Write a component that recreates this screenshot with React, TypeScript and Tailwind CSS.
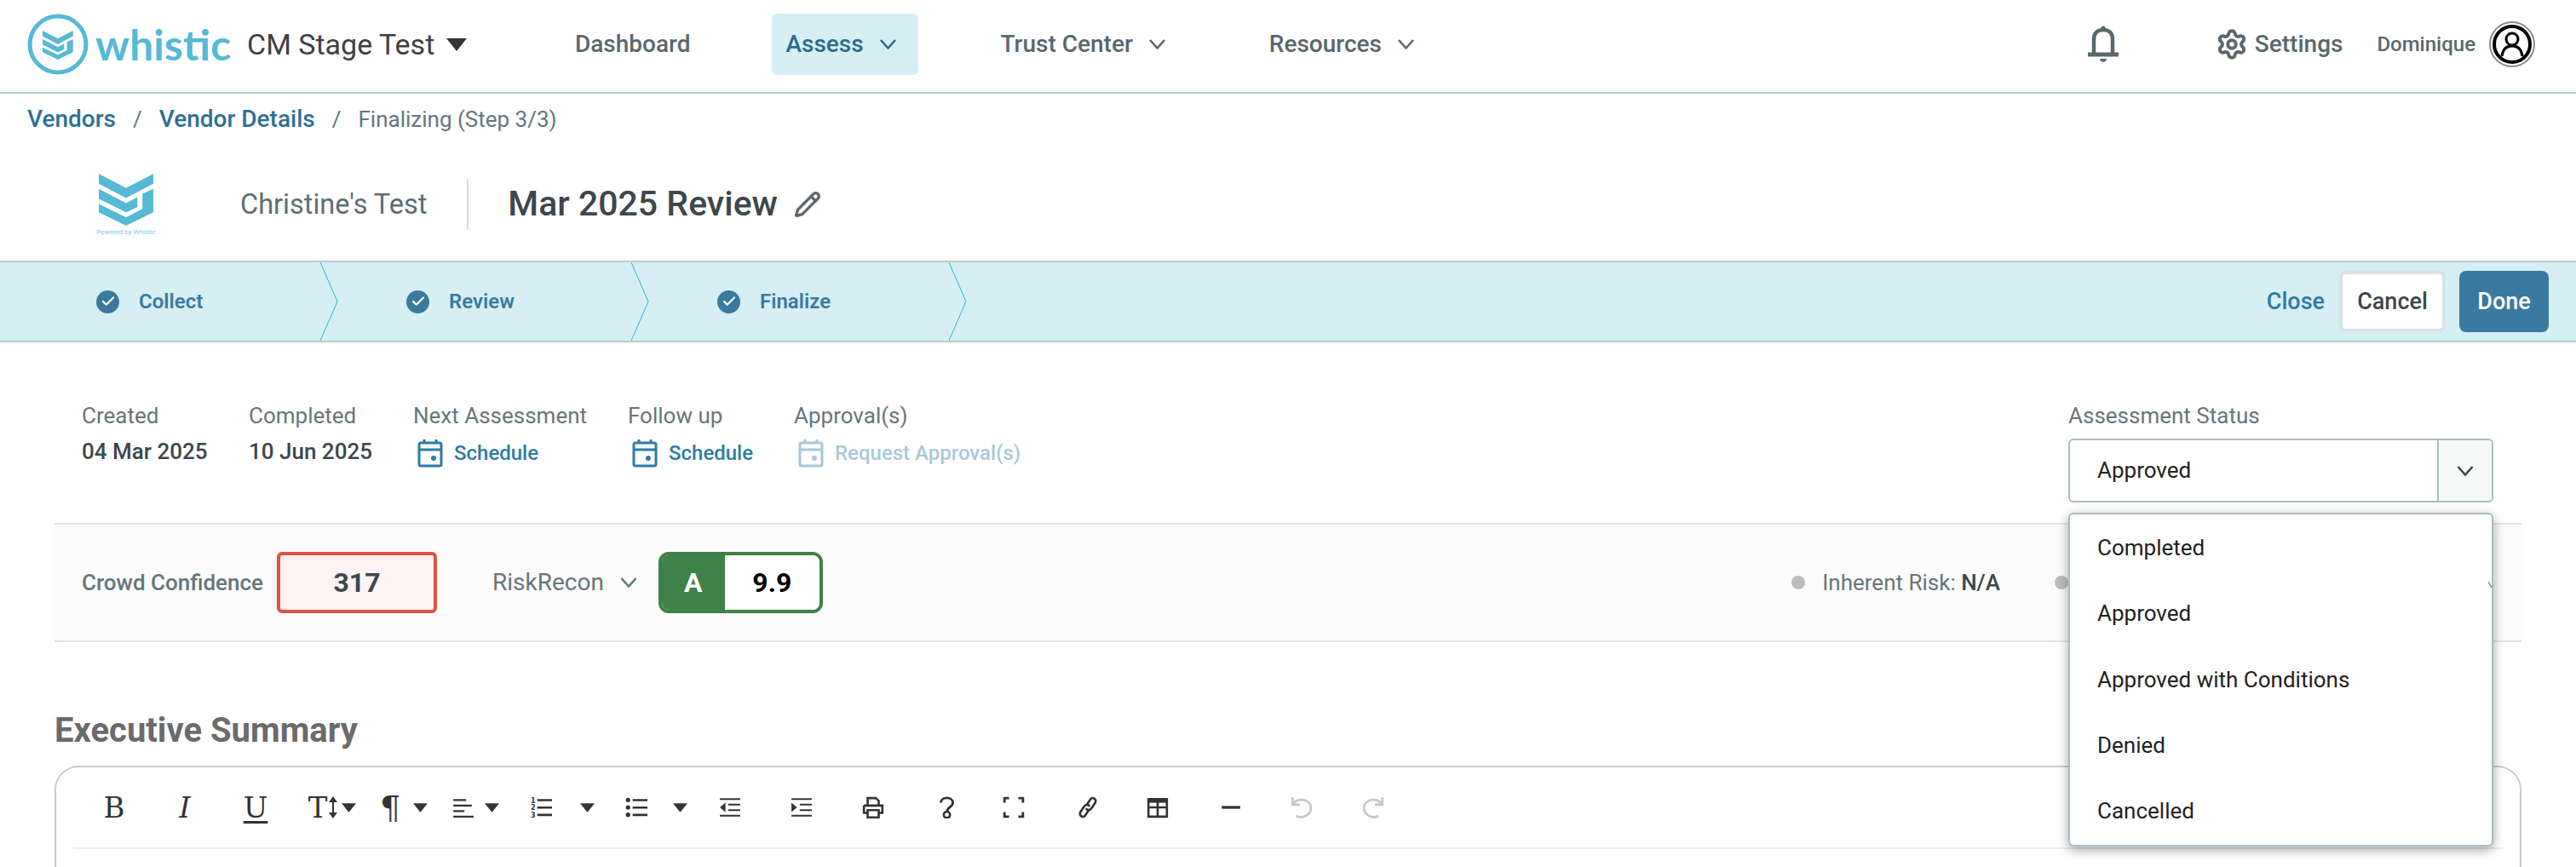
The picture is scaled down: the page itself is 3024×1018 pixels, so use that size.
import { Check, Pencil, Settings } from "lucide-react";

const font = { fontFamily: "Roboto, 'Liberation Sans', sans-serif" };

const WhisticMark = ({ className }: { className?: string }) => (
  <svg viewBox="0 0 65 62" className={className} fill="#56b9d6">
    <path d="M0 0 L32.5 17 L65 0 V12 L32.5 29 L0 12 Z" />
    <path d="M0 18 L32.5 35 L46 28 V40 L32.5 46 L0 30 Z" />
    <path d="M52 24 L65 18 V46 L32.5 62 L0 46 V36 L32.5 52 L52 42 Z" />
  </svg>
);

const Caret = ({ className }: { className?: string }) => (
  <svg viewBox="0 0 16 10" className={className} fill="#333">
    <path d="M0 0 H16 L8 10 Z" />
  </svg>
);

const Chev = ({ className }: { className?: string }) => (
  <svg viewBox="0 0 19 12" className={className} fill="none" stroke="currentColor" strokeWidth="2.6">
    <path d="M1 1 L9.5 10.5 L18 1" />
  </svg>
);

const CalendarIcon = ({ color }: { color: string }) => (
  <svg width="30" height="34" viewBox="0 0 30 34" fill="none" stroke={color} strokeWidth="3">
    <rect x="2" y="5" width="26" height="27" rx="2" />
    <path d="M2 13 H28" strokeWidth="3" />
    <path d="M8 1 V6 M22 1 V6" />
    <circle cx="19" cy="23" r="3" fill={color} stroke="none" />
  </svg>
);

const StepCheck = () => (
  <span className="w-[27px] h-[27px] rounded-full bg-[#3a7a9f] flex items-center justify-center">
    <Check className="w-[18px] h-[18px] text-white" strokeWidth={3} />
  </span>
);

const Step = ({ label, width }: { label: string; width: string }) => (
  <div className={`relative h-full flex items-center ${width}`}>
    <StepCheck />
    <span className="ml-[23px] text-[24px] font-semibold text-[#3a7a9f]">{label}</span>
    <svg
      className="absolute right-0 top-0 h-[92px] w-[21px]"
      viewBox="0 0 21 92"
      fill="none"
      stroke="#22bcd6"
      strokeWidth="1"
    >
      <path d="M0 0 L20 46 L0 92" />
    </svg>
  </div>
);

const MetaDate = ({ label, value, className }: { label: string; value: string; className: string }) => (
  <div className={className}>
    <div className="text-[26px] leading-[30px] text-[#65767a]">{label}</div>
    <div className="text-[26px] leading-[30px] mt-[12px] font-medium text-[#3c474b]">{value}</div>
  </div>
);

const MetaAction = ({
  label,
  action,
  color,
  className,
}: {
  label: string;
  action: string;
  color: string;
  className: string;
}) => (
  <div className={className}>
    <div className="text-[26px] leading-[30px] text-[#65767a]">{label}</div>
    <div className="flex items-center mt-[11px] ml-[5px]">
      <CalendarIcon color={color} />
      <span className="ml-[13px] text-[24px] font-medium" style={{ color }}>
        {action}
      </span>
    </div>
  </div>
);

const GlyphButton = ({ children, className }: { children: React.ReactNode; className: string }) => (
  <span
    className={`flex items-center justify-center text-[34px] leading-none text-[#333] ${className}`}
    style={{ fontFamily: "'DejaVu Serif', serif" }}
  >
    {children}
  </span>
);

const Lines = ({ className, children }: { className: string; children?: React.ReactNode }) => (
  <svg viewBox="0 0 24 24" className={`w-[26px] h-[26px] ${className}`} fill="#333">
    {children}
  </svg>
);

const options = ["Completed", "Approved", "Approved with Conditions", "Denied", "Cancelled"];

export default function App() {
  return (
    <div className="relative h-[1018px] w-[3024px] overflow-hidden bg-white" style={font}>
      {/* Top nav */}
      <header className="flex items-center h-[110px] border-b-2 border-[#b8cbcb] pb-[4px]">
        <svg viewBox="0 0 72 72" className="ml-[32px] w-[72px] h-[72px]" fill="none">
          <circle cx="36" cy="36" r="33" stroke="#56b9d6" strokeWidth="5" />
          <g transform="translate(18 20) scale(0.55)">
            <path fill="#56b9d6" d="M0 0 L32.5 17 L65 0 V12 L32.5 29 L0 12 Z" />
            <path fill="#56b9d6" d="M0 18 L32.5 35 L46 28 V40 L32.5 46 L0 30 Z" />
            <path fill="#56b9d6" d="M52 24 L65 18 V46 L32.5 62 L0 46 V36 L32.5 52 L52 42 Z" />
          </g>
        </svg>
        <span
          className="ml-[8px] w-[158px] text-[50px] leading-none font-bold text-[#56b9d6]"
          style={{ fontFamily: "Lato, sans-serif" }}
        >
          whistic
        </span>
        <span className="ml-[20px] w-[220px] text-[34px] whitespace-nowrap text-[#3f3f3f]">CM Stage Test</span>
        <Caret className="ml-[13px] w-[26px] h-[15px]" />
        <span className="ml-[126px] text-[28px] font-medium text-[#58686c]">Dashboard</span>
        <div className="ml-[96px] w-[172px] h-[72px] rounded-[6px] bg-[#d5eff5] flex items-center pl-[16px]">
          <span className="text-[28px] font-medium text-[#2c6a8c]">Assess</span>
          <Chev className="ml-[19px] w-[19px] h-[12px] text-[#2c6a8c]" />
        </div>
        <span className="ml-[96px] text-[28px] font-medium text-[#58686c]">Trust Center</span>
        <Chev className="ml-[19px] w-[19px] h-[12px] text-[#58686c]" />
        <span className="ml-[122px] text-[28px] font-medium text-[#58686c]">Resources</span>
        <Chev className="ml-[19px] w-[19px] h-[12px] text-[#58686c]" />
        <div className="ml-auto flex items-center">
          <svg viewBox="0 0 36 44" className="w-[36px] h-[44px]" fill="none" stroke="#58686c" strokeWidth="4.5">
            <path d="M7 33 V16 C7 9 11 5 18 5 C25 5 29 9 29 16 V33" />
            <path d="M0 34 H36" strokeWidth="5" />
            <circle cx="18" cy="3" r="2.5" fill="#58686c" stroke="none" />
            <path d="M14 39 H22 C22 44 14 44 14 39 Z" fill="#58686c" stroke="none" />
          </svg>
          <Settings className="ml-[114px] w-[38px] h-[38px] text-[#58686c]" strokeWidth={2.5} />
          <span className="ml-[8px] text-[28px] font-medium text-[#58686c]">Settings</span>
          <span className="ml-[40px] text-[24px] font-medium text-[#58686c]">Dominique</span>
          <span className="ml-[16px] mr-[48px] w-[54px] h-[54px] rounded-full border-2 border-[#8a8a8a] flex items-center justify-center">
            <svg viewBox="0 0 48 48" className="w-[48px] h-[48px]" fill="none" stroke="#000" strokeWidth="3">
              <circle cx="24" cy="24" r="21" strokeWidth="4" />
              <circle cx="24" cy="18" r="7" />
              <path d="M12 38 C13 29 18 26 24 26 C30 26 35 29 36 38" />
            </svg>
          </span>
        </div>
      </header>

      {/* Breadcrumb */}
      <nav className="flex items-center h-[36px] mt-[12px] ml-[32px] text-[26px]">
        <span className="text-[28px] font-medium text-[#2f6f96]">Vendors</span>
        <span className="mx-[20px] text-[#65767a]">/</span>
        <span className="text-[28px] font-medium text-[#2f6f96]">Vendor Details</span>
        <span className="mx-[20px] text-[#65767a]">/</span>
        <span className="text-[#65767a]">Finalizing (Step 3/3)</span>
      </nav>

      {/* Vendor title */}
      <div className="flex items-center h-[96px] mt-[34px] ml-[115px]">
        <div className="w-[66px] flex flex-col items-center">
          <WhisticMark className="w-[66px] h-[61px]" />
          <span className="mt-[4px] text-[8px] leading-none whitespace-nowrap text-[#7ccbe0]">Powered by Whistic</span>
        </div>
        <span className="ml-[101px] text-[32.5px] text-[#5e6e72]">Christine's Test</span>
        <span className="ml-[47px] w-[2px] h-[60px] bg-[#d5dcdc]" />
        <span className="ml-[46px] text-[41px] font-medium text-[#3c474b]">Mar 2025 Review</span>
        <Pencil className="ml-[19px] w-[32px] h-[32px] text-[#58686c]" strokeWidth={2.5} />
      </div>

      {/* Stepper */}
      <div className="flex items-center h-[96px] mt-[18px] border-y-2 border-[#b8cbcb] bg-[#d5eff5]">
        <div className="flex h-full pl-[113px]">
          <Step label="Collect" width="w-[284px]" />
          <div className="pl-[80px] h-full">
            <Step label="Review" width="w-[285px]" />
          </div>
          <div className="pl-[80px] h-full">
            <Step label="Finalize" width="w-[293px]" />
          </div>
        </div>
        <div className="ml-auto flex items-center mr-[32px]">
          <span className="text-[27px] font-medium text-[#2f7ba3]">Close</span>
          <span className="ml-[17px] w-[125px] h-[72px] rounded-[8px] border-4 border-[#d9e3e5] bg-white flex items-center justify-center text-[27px] font-medium text-[#3c474b]">
            Cancel
          </span>
          <span className="ml-[16px] w-[105px] h-[72px] rounded-[8px] bg-[#3a7a9f] flex items-center justify-center text-[27px] font-medium text-white">
            Done
          </span>
        </div>
      </div>

      {/* Assessment meta */}
      <div className="flex h-[212px] pt-[71px] pl-[96px]">
        <MetaDate label="Created" value="04 Mar 2025" className="w-[196px]" />
        <MetaDate label="Completed" value="10 Jun 2025" className="w-[193px]" />
        <MetaAction label="Next Assessment" action="Schedule" color="#2f7ba3" className="w-[252px]" />
        <MetaAction label="Follow up" action="Schedule" color="#2f7ba3" className="w-[195px]" />
        <MetaAction label="Approval(s)" action="Request Approval(s)" color="#a9c8d8" className="w-[300px]" />
        <div className="ml-auto mr-[97px] w-[499px]">
          <div className="text-[26px] leading-[30px] text-[#65767a]">Assessment Status</div>
          <div className="flex mt-[12px] h-[75px] rounded-[6px] border-2 border-[#a9bec2]">
            <span className="flex-1 flex items-center pl-[32px] text-[26px] text-[#222]">Approved</span>
            <span className="w-[64px] flex items-center justify-center border-l-2 border-[#a9bec2] bg-[#f7f9f9] rounded-r-[6px]">
              <Chev className="w-[20px] h-[12px] text-[#3c474b]" />
            </span>
          </div>
        </div>
      </div>

      {/* Scores */}
      <div className="flex items-center mx-[64px] h-[140px] border-y-2 border-[#dfe5e6] bg-[#fbfbfb] pl-[32px]">
        <span className="text-[26px] font-medium text-[#65767a]">Crowd Confidence</span>
        <span className="ml-[16px] w-[188px] h-[72px] rounded-[6px] border-4 border-[#e25241] bg-[#fdf3f2] flex items-center justify-center text-[32px] font-bold text-[#3c474b]">
          317
        </span>
        <span className="ml-[65px] text-[28px] text-[#65767a]">RiskRecon</span>
        <Chev className="ml-[19px] w-[20px] h-[12px] text-[#65767a]" />
        <div className="ml-[25px] flex w-[193px] h-[72px] rounded-[12px] border-4 border-[#3f8147] overflow-hidden">
          <span className="w-[74px] bg-[#3f8147] flex items-center justify-center text-[32px] font-bold text-white">A</span>
          <span className="flex-1 bg-white flex items-center justify-center text-[32px] font-bold text-black">9.9</span>
        </div>
        <span className="ml-auto w-[16px] h-[16px] rounded-full bg-[#bdbdbd]" />
        <span className="ml-[20px] text-[26px] text-[#65767a]">
          Inherent Risk: <span className="font-medium text-[#3c474b]">N/A</span>
        </span>
        <span className="ml-[64px] mr-[532px] w-[16px] h-[16px] rounded-full bg-[#bdbdbd]" />
      </div>

      {/* Executive summary */}
      <h2 className="mt-[81px] ml-[64px] text-[40px] leading-[46px] font-bold text-[#6b6b6b]">Executive Summary</h2>
      <div className="mx-[64px] mt-[18px] h-[130px] rounded-t-[28px] border-x-2 border-t-2 border-[#cccccc] px-[20px]">
        <div className="flex items-center h-[96px] border-b-2 border-[#eeeeee] pl-[38px]">
          <GlyphButton className="w-[20px]">B</GlyphButton>
          <GlyphButton className="ml-[64px] w-[18px] italic">I</GlyphButton>
          <GlyphButton className="ml-[63px] w-[22px] underline decoration-[3px] underline-offset-[4px]">U</GlyphButton>
          <GlyphButton className="ml-[50px] w-[24px]">T</GlyphButton>
          <svg viewBox="0 0 12 26" className="w-[12px] h-[26px]" fill="#333">
            <path d="M6 0 L11 7 H7 V19 H11 L6 26 L1 19 H5 V7 H1 Z" />
          </svg>
          <Caret className="ml-[4px] w-[17px] h-[11px]" />
          <GlyphButton className="ml-[31px] w-[18px] text-[38px]">¶</GlyphButton>
          <Caret className="ml-[18px] w-[17px] h-[11px]" />
          <Lines className="ml-[28px]">
            <path d="M2 3 H16 V5 H2 Z M2 9 H22 V11 H2 Z M2 15 H14 V17 H2 Z M2 21 H24 V23 H2 Z" />
          </Lines>
          <Caret className="ml-[13px] w-[17px] h-[11px]" />
          <Lines className="ml-[36px]">
            <path d="M8 3 H24 V5.4 H8 Z M8 11 H24 V13.4 H8 Z M8 19 H24 V21.4 H8 Z" />
            <text x="1" y="7" fontSize="7.5" fontWeight="700" fontFamily="'DejaVu Sans', sans-serif">1</text>
            <text x="1" y="15" fontSize="7.5" fontWeight="700" fontFamily="'DejaVu Sans', sans-serif">2</text>
            <text x="1" y="23" fontSize="7.5" fontWeight="700" fontFamily="'DejaVu Sans', sans-serif">3</text>
          </Lines>
          <Caret className="ml-[33px] w-[17px] h-[11px]" />
          <Lines className="ml-[36px]">
            <path d="M8 3 H24 V5.4 H8 Z M8 11 H24 V13.4 H8 Z M8 19 H24 V21.4 H8 Z" />
            <circle cx="3" cy="4" r="2.4" />
            <circle cx="3" cy="12" r="2.4" />
            <circle cx="3" cy="20" r="2.4" />
          </Lines>
          <Caret className="ml-[30px] w-[17px] h-[11px]" />
          <Lines className="ml-[37px]">
            <path d="M1 2 H23 V4 H1 Z M10 8 H23 V10 H10 Z M10 14 H23 V16 H10 Z M1 20 H23 V22 H1 Z M7 7 V17 L1 12 Z" />
          </Lines>
          <Lines className="ml-[58px]">
            <path d="M1 2 H23 V4 H1 Z M10 8 H23 V10 H10 Z M10 14 H23 V16 H10 Z M1 20 H23 V22 H1 Z M1 7 V17 L7 12 Z" />
          </Lines>
          <Lines className="ml-[58px]">
            <path
              fill="none"
              stroke="#333"
              strokeWidth="2.4"
              d="M6 10 V2 H15 L18 5 V10 M2 10 H22 V18 H18 M6 18 H2 V10 M6 15 H18 V23 H6 Z"
            />
          </Lines>
          <Lines className="ml-[60px]">
            <path fill="none" stroke="#333" strokeWidth="2.6" d="M6 7 C6 0 19 0 19 7 C19 12 13 11 13 16" />
            <ellipse cx="12.5" cy="20" rx="3.4" ry="3.4" fill="none" stroke="#333" strokeWidth="2.4" />
          </Lines>
          <Lines className="ml-[53px]">
            <path fill="none" stroke="#333" strokeWidth="2.6" d="M7 2 H2 V7 M17 2 H22 V7 M7 22 H2 V17 M17 22 H22 V17" />
          </Lines>
          <Lines className="ml-[61px]">
            <path
              fill="none"
              stroke="#333"
              strokeWidth="2.4"
              d="M11 9 L15 3 C17 0 22 3 20 7 L16 13 C14 16 11 15 10 13 M13 15 L9 21 C7 24 2 21 4 17 L8 11 C10 8 13 9 14 11"
            />
          </Lines>
          <Lines className="ml-[56px]">
            <path fill="none" stroke="#333" strokeWidth="2.4" d="M2 3 H22 V22 H2 Z M12 3 V22 M2 12 H22" />
            <path d="M2 2 H22 V7 H2 Z" />
          </Lines>
          <Lines className="ml-[60px]">
            <path d="M2 10.5 H22 V13.5 H2 Z" />
          </Lines>
          <Lines className="ml-[56px]">
            <path fill="none" stroke="#c8c8c8" strokeWidth="2.6" d="M3 1 V9 H11 M3 9 C7 1 23 2 23 13 C23 20 13 25 7 21" />
          </Lines>
          <Lines className="ml-[60px]">
            <path fill="none" stroke="#c8c8c8" strokeWidth="2.6" d="M21 1 V9 H13 M21 9 C17 1 1 2 1 13 C1 20 11 25 17 21" />
          </Lines>
        </div>
      </div>

      {/* Status dropdown */}
      <div className="absolute left-[2428px] top-[602px] w-[499px] h-[392px] rounded-[6px] border-2 border-[#a9bec2] bg-white shadow-[0_4px_14px_rgba(0,0,0,0.35)] py-[1px] flex flex-col">
        {options.map((o) => (
          <div key={o} className="h-[78px] flex items-center pl-[32px] text-[26px] text-[#222]">
            {o}
          </div>
        ))}
        <svg viewBox="0 0 5 8" className="absolute left-[491px] top-[79px] w-[5px] h-[8px]" fill="none" stroke="#888" strokeWidth="1.5">
          <path d="M0 0 L4 7" />
        </svg>
      </div>
    </div>
  );
}
